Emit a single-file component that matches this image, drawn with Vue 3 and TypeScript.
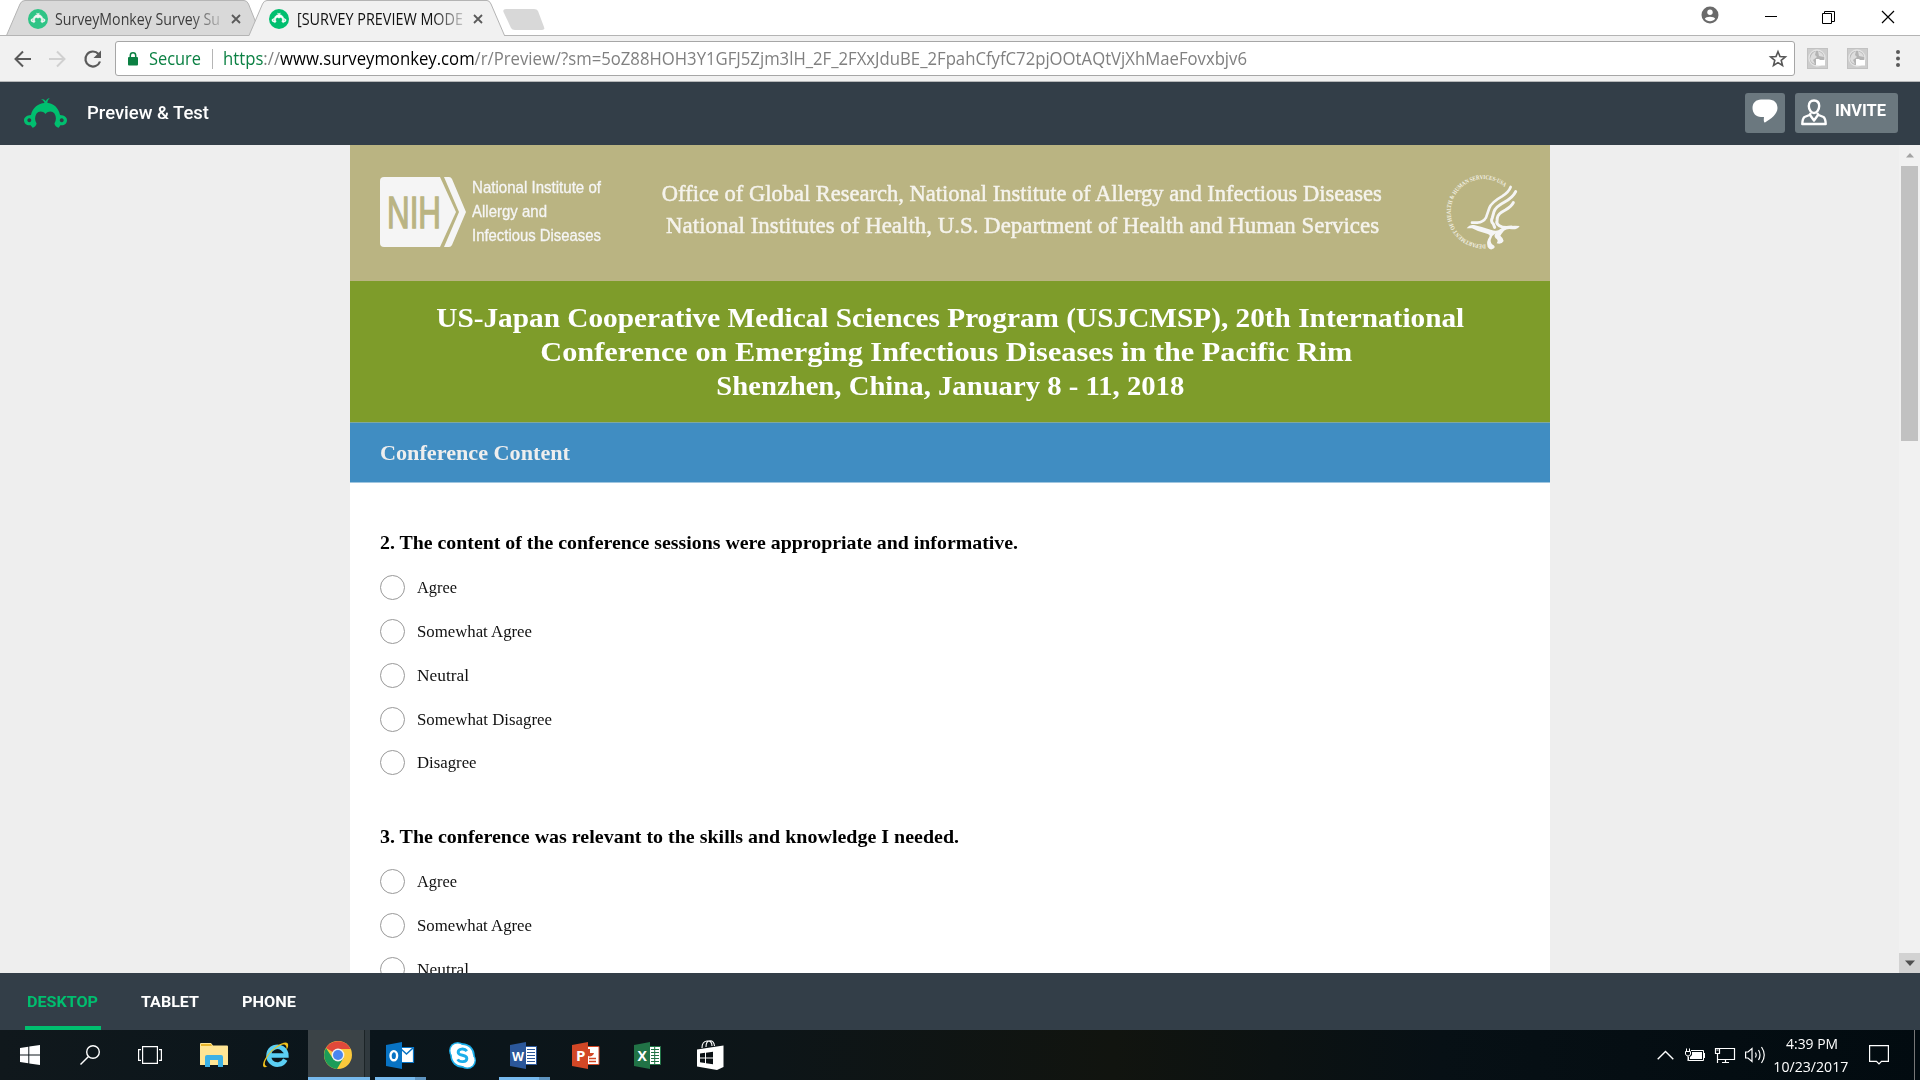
<script setup lang="ts">
import type { Directive } from 'vue'

// Condenses or widens a line of text so that it takes up the given width
const vFit: Directive<HTMLElement, number> = {
  mounted(el, { value }) {
    const natural = el.getBoundingClientRect().width
    if (natural > 0) el.style.transform = `scaleX(${value / natural})`
  },
}

interface Option { label: string; width: number }
interface Question { id: number; text: string; width: number; options: Option[] }

const options: Option[] = [
  { label: 'Agree', width: 40 },
  { label: 'Somewhat Agree', width: 115 },
  { label: 'Neutral', width: 52 },
  { label: 'Somewhat Disagree', width: 135 },
  { label: 'Disagree', width: 59.500 },
]

const questions: Question[] = [
  { id: 2, text: 'The content of the conference sessions were appropriate and informative.', width: 638, options },
  { id: 3, text: 'The conference was relevant to the skills and knowledge I needed.', width: 579, options: options.slice(0, 3) },
]

const title = [
  { text: 'US-Japan Cooperative Medical Sciences Program (USJCMSP), 20th International', width: 1028 },
  { text: 'Conference on Emerging Infectious Diseases in the Pacific Rim ', width: 812 },
  { text: 'Shenzhen, China, January 8 - 11, 2018', width: 468 },
]

const devices = [
  { name: 'DESKTOP', width: 71 },
  { name: 'TABLET', width: 58 },
  { name: 'PHONE', width: 54 },
]

const monkey =
  'M68 384C74 382 79 377 80 371C74 362 74 350 80 341C86 333 98 332 107 342C116 332 128 333 134 341C140 350 140 362 134 371C135 377 140 382 147 384L152 376C163 378 172 371 172 361C172 352 165 346 151 345C146 322 131 310 113 309C112 304 115 299 120 294C113 296 109 299 108 304C105 299 101 297 93 297C99 300 102 304 104 309C86 310 68 322 63 345C50 346 42 352 42 361C42 371 51 378 62 376ZM58 355a6 6 0 1 0 .1 0ZM156 355a6 6 0 1 0 .1 0Z'
</script>

<template>
  <div class="screen">
    <div class="tabstrip">
      <svg class="tab-shapes" width="560" height="36" viewBox="0 0 560 36">
        <path d="M6.500 35.500L20 4Q21.500.5 25 .5H244Q247 .5 248.500 4L261 35.500Z" fill="#d9d9d9" stroke="#b4b4b4" />
        <path d="M249 36L262.500 4Q264 .5 267 .5H487Q489.500 .5 491 4L504.500 36Z" fill="#f1f1f1" />
        <path d="M0 35.500H249L262.500 4Q264 .5 267 .5H487Q489.500 .5 491 4L504.500 35.500H560" fill="none" stroke="#b4b4b4" />
        <path d="M506 9H534Q537 9 538 11L544 27Q545 30 542 30H515Q512 30 511 28L503.500 12Q502.500 9 506 9Z" fill="#d8d8d8" />
      </svg>
      <div class="tab tab-first">
        <svg class="fav faded" width="20" height="20" viewBox="0 0 20 20"><circle cx="10" cy="10" r="10" fill="#00bf6f" /><svg x="3" y="3.500" width="14" height="11" viewBox="42 294 130 92"><path :d="monkey" fill="#fff" stroke="#fff" stroke-width="5" fill-rule="evenodd" /></svg></svg>
        <span class="tab-label"><span v-fit="165" class="fit">SurveyMonkey Survey Su</span></span>
        <svg class="x" width="10" height="10" viewBox="0 0 10 10"><path d="M1 1L9 9M9 1L1 9" /></svg>
      </div>
      <div class="tab tab-second">
        <svg class="fav" width="20" height="20" viewBox="0 0 20 20"><circle cx="10" cy="10" r="10" fill="#00bf6f" /><svg x="3" y="3.500" width="14" height="11" viewBox="42 294 130 92"><path :d="monkey" fill="#fff" stroke="#fff" stroke-width="5" fill-rule="evenodd" /></svg></svg>
        <span class="tab-label dark"><span v-fit="166" class="fit">[SURVEY PREVIEW MODE</span></span>
        <svg class="x" width="10" height="10" viewBox="0 0 10 10"><path d="M1 1L9 9M9 1L1 9" /></svg>
      </div>
      <div class="window-controls">
        <svg width="18" height="18" viewBox="0 0 18 18"><circle cx="9" cy="9" r="8.500" fill="#6a6a6a" /><circle cx="9" cy="6.300" r="2.700" fill="#fff" /><path d="M3.800 12.800C4.500 10 13.500 10 14.200 12.800C12 16 6 16 3.800 12.800Z" fill="#fff" /></svg>
        <svg width="12" height="14" viewBox="0 0 12 14"><path d="M0 6.500H12" stroke="#000" /></svg>
        <svg width="13" height="13" viewBox="0 0 13 13" fill="none" stroke="#000"><path d="M.5 2.500H9.500V12.500H.5ZM2.500 2.500V.5H12.500V10.500H9.500" /></svg>
        <svg width="12" height="12" viewBox="0 0 12 12"><path d="M0 0L12 12M12 0L0 12" stroke="#000" stroke-width="1.200" /></svg>
      </div>
    </div>

    <div class="toolbar">
      <svg class="nav-icons" width="90" height="24" viewBox="0 0 90 24" fill="none" stroke-width="2">
        <path d="M17 12H2M9 4.500L1.500 12L9 19.500" stroke="#5a5a5a" />
        <path d="M35 12H50M43 4.500L50.500 12L43 19.500" stroke="#d0d0d0" />
        <path d="M84.500 7A7.500 7.500 0 1 0 86 14.500" stroke="#5a5a5a" stroke-width="2.200" />
        <path d="M87 3.500V11H79.500Z" fill="#5a5a5a" />
      </svg>
      <div class="omnibox">
        <svg width="10" height="14" viewBox="0 0 10 14"><path d="M2.300 6V3.500a2.700 2.700 0 0 1 5.400 0V6" fill="none" stroke="#0b8043" stroke-width="1.500" /><rect y="5" width="10" height="8.500" rx="1" fill="#0b8043" /></svg>
        <span class="secure"><span v-fit="52" class="fit">Secure</span></span>
        <span class="divider"></span>
        <span class="url"><span v-fit="1024" class="fit"><span class="green">https</span>://<span class="host">www.surveymonkey.com</span>/r/Preview/?sm=5oZ88HOH3Y1GFJ5Zjm3lH_2F_2FXxJduBE_2FpahCfyfC72pjOOtAQtVjXhMaeFovxbjv6</span></span>
        <svg width="18" height="17" viewBox="0 0 18 17"><path d="M9 1.700L11 6.600L16.300 7L12.200 10.300L13.500 15.400L9 12.600L4.500 15.400L5.800 10.300L1.700 7L7 6.600Z" fill="none" stroke="#555" stroke-width="1.600" /></svg>
      </div>
      <svg v-for="n in 2" :key="n" class="ext" width="21" height="21" viewBox="0 0 21 21">
        <rect width="21" height="21" fill="#c2c2c2" /><rect x="1" y="1" width="19" height="19" fill="#cdcdcd" />
        <circle cx="10" cy="10" r="8" fill="#b4b4b4" stroke="#e4e4e4" stroke-width="1.300" />
        <path d="M3 11Q4 5 9 3L8 7L10 9L6 12L8 16Q4 15 3 11ZM11 3Q16 5 17 9L12 8Z" fill="#dedede" /><path d="M9 11H12L13 12H18V17.500H9Z" fill="#fff" />
      </svg>
      <svg class="dots" width="4" height="17" viewBox="0 0 4 17" fill="#5a5a5a"><circle cx="2" cy="2" r="2" /><circle cx="2" cy="8.500" r="2" /><circle cx="2" cy="15" r="2" /></svg>
    </div>

    <header class="header">
      <svg width="43" height="30.500" viewBox="42 294 130 92"><path :d="monkey" fill="#00bf6f" fill-rule="evenodd" /></svg>
      <span class="page-name"><span v-fit="122" class="fit">Preview &amp; Test</span></span>
      <button class="chat">
        <svg width="26" height="24" viewBox="0 0 26 24"><path d="M9 .5H17C22 .5 25.500 4 25.500 9C25.500 15 19 20 13 23.500C12 23.500 11.500 22 12 18H9C4 18 .5 14 .5 9C.5 4 4 .5 9 .5Z" fill="#fff" /></svg>
      </button>
      <button class="invite">
        <svg width="26" height="26" viewBox="0 0 26 26" fill="none" stroke="#fff" stroke-width="2.400" stroke-linejoin="round"><path d="M13 1.500C9.500 1.500 7.800 4 7.800 7C7.800 11 10.500 14 13 14S18.200 11 18.200 7C18.200 4 16.500 1.500 13 1.500Z" /><path d="M10 14L8.500 16L3.500 18Q1.500 19.500 1.300 25H24.700Q24.500 19.500 22.500 18L17.500 16L16 14M9 16L13 21.500L17 16" /></svg>
        <span v-fit="51" class="fit">INVITE</span>
      </button>
    </header>

    <main class="viewport">
      <div class="survey">
        <div class="banner">
          <svg width="84" height="70" viewBox="0 0 84 70">
            <path d="M4 0H60L76 35L60 70H4Q0 70 0 66V4Q0 0 4 0Z" fill="#f5f5f5" />
            <path d="M64 0H69Q71 0 72 2L86 35L72 68Q71 70 69 70H64L79 35Z" fill="#f5f5f5" />
            <text x="7" y="50.500" textLength="54" lengthAdjust="spacingAndGlyphs" font-family="Liberation Sans" font-size="44" stroke-width="1.400" stroke="#bab482" fill="#bab482">NIH</text>
          </svg>
          <div class="institute">
            <div><span v-fit="129" class="fit">National Institute of</span></div>
            <div><span v-fit="75" class="fit">Allergy and</span></div>
            <div><span v-fit="129" class="fit">Infectious Diseases</span></div>
          </div>
          <div class="office">
            <div><span v-fit="720" class="fit">Office of Global Research, National Institute of Allergy and Infectious Diseases</span></div>
            <div><span v-fit="713" class="fit">National Institutes of Health, U.S. Department of Health and Human Services</span></div>
          </div>
          <svg class="hhs" width="110" height="95" viewBox="0 0 330 285" fill="none" stroke="#f5f5f5">
            <path id="seal" d="M167 238A98 98 0 1 1 234 76" stroke="none" />
            <text font-family="Liberation Serif" font-weight="bold" font-size="18" fill="#f3f1e6" stroke="none"><textPath href="#seal" textLength="384" lengthAdjust="spacingAndGlyphs">DEPARTMENT OF HEALTH &amp; HUMAN SERVICES·USA</textPath></text>
            <g stroke-width="8" stroke-linecap="round" stroke-linejoin="round">
              <path d="M242 66Q236 82 216 94Q184 112 178 129L168 158Q160 172 142 173H126" />
              <path d="M257 80Q248 98 224 111Q197 125 192 140L187 158Q181 169 190 177L194 187" stroke-width="9" />
              <path d="M250 113Q244 125 226 135Q204 146 202 158L201 168Q198 176 208 182Q220 190 244 186" stroke-width="9" />
            </g>
            <path d="M110 190Q118 178 132 180Q158 186 182 194Q202 201 211 192Q219 185 232 186Q246 180 269 183Q263 194 246 193Q231 190 222 197Q214 207 211 212Q220 219 221 228Q214 240 200 235Q207 226 197 220Q190 213 197 205Q187 211 184 220Q179 228 186 238Q198 244 192 250Q180 258 173 246Q168 229 178 216Q183 209 166 205Q142 199 126 190Z" fill="#f5f5f5" stroke="none" />
          </svg>
        </div>

        <h1 class="title">
          <div v-for="line in title" :key="line.text"><span v-fit="line.width" class="fit">{{ line.text }}</span></div>
        </h1>
        <h2 class="section"><span v-fit="190" class="fit">Conference Content</span></h2>

        <section v-for="q in questions" :key="q.id" class="question">
          <h3><span v-fit="q.width" class="fit">{{ q.id }}. {{ q.text }}</span></h3>
          <label v-for="o in q.options" :key="o.label" class="option">
            <span class="radio"></span><span v-fit="o.width" class="fit">{{ o.label }}</span>
          </label>
        </section>
      </div>
      <div class="scrollbar">
        <span class="scroll-button"><svg width="8" height="5" viewBox="0 0 8 5"><path d="M4 0L8 4.500H0Z" fill="#a3a3a3" /></svg></span>
        <span class="thumb"></span>
        <span class="scroll-button down"><svg width="10" height="6" viewBox="0 0 10 6"><path d="M0 .5H10L5 6Z" fill="#505050" /></svg></span>
      </div>
    </main>

    <nav class="devices">
      <span v-for="(d, i) in devices" :key="d.name" class="device" :class="{ active: i === 0 }"><span v-fit="d.width" class="fit">{{ d.name }}</span></span>
    </nav>

    <footer class="taskbar">
      <div class="slot"><svg width="20" height="20" viewBox="0 0 20 20" fill="#fff"><path d="M0 3L8.300 1.800V9.500H0ZM9.300 1.600L20 0V9.500H9.300ZM0 10.500H8.300V18.200L0 17ZM9.300 10.500H20V20L9.300 18.400Z" /></svg></div>
      <div class="slot"><svg width="20" height="20" viewBox="0 0 20 20" fill="none" stroke="#fff" stroke-width="1.400"><circle cx="13" cy="7" r="6.300" /><path d="M8.500 11.500L.5 19.500" /></svg></div>
      <div class="slot task-view"><svg width="24" height="18" viewBox="0 0 24 18" fill="none" stroke="#fff" stroke-width="1.200"><path d="M4.600.6H19.400V17.400H4.600ZM3 3.600H.6V14.400H3M21 3.600H23.400V14.400H21" /></svg></div>
      <div class="slot wide"><svg width="28" height="24" viewBox="0 0 28 24"><path d="M0 1Q0 0 1 0H11L13 2.500H27Q28 2.500 28 3.500V22H0Z" fill="#ffe594" /><path d="M1 1H11L12 3H1Z" fill="#e8b62c" /><path d="M5 24V14Q5 12 7 12H21Q23 12 23 14V24H18V17H10V24Z" fill="#3cb1e6" /></svg></div>
      <div class="slot wide explorer"><svg width="28" height="28" viewBox="0 0 30 30"><path d="M25 20A9.500 9.500 0 1 1 26 15.500H9" fill="none" stroke="#5bcff4" stroke-width="5" /><path d="M6 27C0 31-1 24 6 15C14 4 29-3 28 5C28 7 27 8 26 10C27 5 25 2 19 5C10 9 3 20 3 24Q3 27 6 27Z" fill="#f2c21b" /></svg></div>
      <div class="slot wide chrome">
        <svg width="28" height="28" viewBox="0 0 28 28"><circle cx="14" cy="14" r="14" fill="#fbc93c" /><path d="M14 14L2 7A14 14 0 0 1 26.500 8H14Z" fill="#e0493b" /><path d="M2 7A14 14 0 0 0 13 28L19.500 17L14 14L8.500 17Z" fill="#1c9c58" /><circle cx="14" cy="14" r="6.400" fill="#f1f1f1" /><circle cx="14" cy="14" r="5" fill="#4a86ee" /></svg>
      </div>
      <div class="slot wide running"><svg width="28" height="27" viewBox="0 0 28 27"><path d="M15 5.500H27.500V20.500H15Z" fill="#fff" stroke="#0873c4" stroke-width="1.200" /><path d="M15 7L20.500 12L27 6" fill="none" stroke="#0873c4" stroke-width="1.500" /><path d="M0 3L16 0V27L0 24Z" fill="#0873c4" /><ellipse cx="7.800" cy="13.700" rx="3.300" ry="4.600" fill="none" stroke="#fff" stroke-width="2.400" /></svg></div>
      <div class="slot wide"><svg width="27" height="27" viewBox="0 0 28 28"><circle cx="9" cy="9" r="9" fill="#1baeea" /><circle cx="19" cy="19" r="9" fill="#1baeea" /><circle cx="14" cy="14" r="12.700" fill="#1baeea" /><circle cx="9" cy="9" r="7.500" fill="#fff" /><circle cx="19" cy="19" r="7.500" fill="#fff" /><circle cx="14" cy="14" r="11" fill="#fff" /><path d="M18.500 9.500C16 6 9.500 7 9.500 10.500C9.500 15 18.500 12.500 18.500 17C18.500 21 11 21.500 9 18" fill="none" stroke="#1baeea" stroke-width="3" /></svg></div>
      <div class="slot wide running"><svg width="28" height="27" viewBox="0 0 28 27"><path d="M15 4.500H26.500V22.500H15Z" fill="#fff" stroke="#2b579a" /><path d="M17 7.500H25M17 10.500H25M17 13.500H25M17 16.500H25M17 19.500H25" stroke="#2b579a" stroke-width="1.200" /><path d="M0 3L16 0V27L0 24Z" fill="#2b579a" /><text x="2" y="18.500" fill="#fff" font-family="Open Sans" font-weight="bold" font-size="13" textLength="12" lengthAdjust="spacingAndGlyphs">W</text></svg></div>
      <div class="slot wide"><svg width="28" height="27" viewBox="0 0 28 27"><path d="M15 4.500H27V22.500H15Z" fill="#fff" stroke="#d24726" /><path d="M17 16.500H24M17 19.500H24" stroke="#d24726" stroke-width="1.300" /><path d="M16 7A4 4 0 1 0 22 11H18V7Z" fill="#d24726" /><path d="M0 3L16 0V27L0 24Z" fill="#d24726" /><text x="4" y="19" fill="#fff" font-family="Open Sans" font-weight="bold" font-size="15">P</text></svg></div>
      <div class="slot wide"><svg width="28" height="27" viewBox="0 0 28 27"><path d="M15 4.500H26.500V22.500H15Z" fill="#fff" stroke="#217346" /><path d="M17 7.500H25M17 10.500H25M17 13.500H25M17 16.500H25M17 19.500H25M20.700 5V22" stroke="#217346" /><path d="M0 3L16 0V27L0 24Z" fill="#217346" /><text x="3.500" y="18.800" fill="#fff" font-family="Open Sans" font-weight="bold" font-size="14">X</text></svg></div>
      <div class="slot wide"><svg width="27" height="30" viewBox="0 0 27 30"><path d="M5 8Q5 1.500 10 1T15 6M9 7Q9 .8 13 .8Q17 .8 17.500 6" fill="none" stroke="#fff" stroke-width="1.100" /><path d="M0 9.500L26.500 5.500V27L20 30L0 26.500Z" fill="#fff" /><path d="M3 13.500L8 12.800V17.500H3ZM9 12.700L16 11.700V17.500H9ZM3 18.500H8V23L3 22.300ZM9 18.500H16V24.200L9 23.200Z" fill="#0b1115" /></svg></div>

      <div class="tray">
        <svg width="17" height="10" viewBox="0 0 17 10"><path d="M.7 9.300L8.500 1.500L16.300 9.300" fill="none" stroke="#fff" stroke-width="1.400" /></svg>
        <svg width="20" height="14" viewBox="0 0 20 14"><path d="M1.500.5V3M4.500.5V3M.5 3.500H5.500V6Q5 8 3 8T.5 6ZM3 8V13" fill="none" stroke="#fff" /><path d="M6 2.500H18.500V12.500H3.500V9" fill="none" stroke="#fff" /><path d="M7 4H17V11H5V9L7 7ZM19 5H20V10H19Z" fill="#fff" /></svg>
        <svg width="20" height="17" viewBox="0 0 20 17" fill="none" stroke="#fff"><path d="M5 1.500H19.500V12.500H3M10.500 13V16M7 15.500H14M.5 1.500H4.500V6.500H.5ZM2.500 7V16" stroke-width="1.200" /><path d="M1.500 3H3.500" /></svg>
        <svg width="21" height="18" viewBox="0 0 21 18" fill="none" stroke="#fff" stroke-width="1.200"><path d="M.6 6H3L7 2.500V15.500L3 12H.6ZM10.500 6.500Q12 9 10.500 11.500M13.500 4Q16.500 9 13.500 14M16.500 1Q22 9 16.500 17" /></svg>
        <div class="clock">
          <div><span v-fit="52" class="fit">4:39 PM</span></div>
          <div><span v-fit="75" class="fit date">10/23/2017</span></div>
        </div>
        <svg class="note" width="20" height="20" viewBox="0 0 20 20"><path d="M.6.6H19.400V16.400H12.500L10 19L7.500 16.400H.6Z" fill="none" stroke="#fff" stroke-width="1.200" /></svg>
        <span class="peek"></span>
      </div>
    </footer>
  </div>
</template>

<style>
body { margin: 0; overflow: hidden; }
</style>

<style scoped>
.screen { width: 1920px; height: 1080px; display: flex; flex-direction: column; overflow: hidden; background: #fff; font-family: "Open Sans", sans-serif; }
svg { display: block; flex: none; overflow: visible; }
.fit { display: inline-block; white-space: nowrap; transform-origin: left center; }

.tabstrip { position: relative; height: 35px; flex: none; display: flex; border-bottom: 1px solid #b4b4b4; }
.tab-shapes { position: absolute; left: 0; top: 0; }
.tab { position: relative; display: flex; align-items: center; height: 38px; }
.tab-first { margin-left: 28px; width: 241px; }
.tab-second { width: 260px; }
.fav { margin-right: 7px; }
.tab-second .fav { margin-right: 8px; }
.faded { opacity: .78; }
.tab-label { width: 166px; margin-top: -1px; overflow: hidden; font-size: 15.500px; line-height: 22px; color: #3c3c3c; mask-image: linear-gradient(to right, #000 82%, rgba(0, 0, 0, .2)); }
.tab-label.dark { color: #111; }
.x { margin-left: 10px; stroke: #5a5a5a; stroke-width: 1.800; }
.window-controls { margin-left: auto; margin-right: 26px; display: flex; align-items: center; gap: 46px; height: 34px; }
.window-controls svg:first-child { position: relative; top: -2px; left: 1px; }
.window-controls svg:nth-child(2) { position: relative; left: 1px; }
.window-controls svg:last-child { margin-left: 1px; }

.toolbar { height: 45px; flex: none; display: flex; align-items: center; background: #f1f1f1; border-bottom: 1px solid #b6b7b9; }
.nav-icons { margin: 0 11px 0 14px; }
.omnibox { box-sizing: border-box; width: 1680px; height: 35px; display: flex; align-items: center; border: 1px solid #a6a6a6; border-radius: 3px; background: #fff; padding: 0 7px 0 12px; font-size: 17.500px; line-height: 24px; }
.secure { margin: -1px 0 0 11px; width: 63px; color: #0b8043; }
.divider { width: 1px; height: 20px; background: #b5b5b5; margin-right: 10px; }
.url { width: 1030px; margin: -1px auto 0 0; color: #808080; }
.green { color: #0b8043; }
.host { color: #000; }
.ext { margin-left: 12px; }
.ext + .ext { margin-left: 19px; }
.dots { margin-left: 28px; }

.header { height: 63px; flex: none; box-sizing: border-box; display: flex; align-items: center; background: #333e48; padding: 0 22px 1px 24px; color: #fff; }
.page-name { margin-left: 20px; font: 500 18px/24px Roboto, sans-serif; }
button { border: 0; border-radius: 3px; background: #6b787f; height: 40px; padding: 0; display: flex; align-items: center; margin-top: -1px; }
.chat { margin-left: auto; width: 40px; justify-content: center; padding-bottom: 3px; }
.invite { margin-left: 10px; width: 103px; padding-left: 6px; gap: 8px; color: #fff; font: 700 16px/20px Roboto, sans-serif; }
.invite svg { margin-top: -2px; }
.invite .fit { margin-top: -3px; }

.viewport { position: relative; height: 828px; flex: none; overflow: hidden; display: flex; background: #eee; }
.survey { width: 1200px; height: 828px; margin-left: 350px; background: #fff; font-family: "Liberation Serif", serif; flex: none; }
.banner { height: 136px; box-sizing: border-box; background: #bab482; display: flex; align-items: flex-start; padding: 32px 10px 0 30px; }
.institute { width: 150px; margin-left: 8px; font: 17px/24px "Liberation Sans", sans-serif; color: #f5f5f5; margin-top: -1px; -webkit-text-stroke: .3px #f5f5f5; }
.office { width: 780px; text-align: center; font-size: 24px; line-height: 32px; color: #f5f3ec; -webkit-text-stroke: .5px #f5f3ec; margin-left: 16px; }
.office .fit, .title .fit { transform-origin: center; }
.hhs { margin: -12px 0 0 22px; }
.title { margin: 0; box-sizing: border-box; height: 142px; padding-top: 20px; border-bottom: 1px solid #7fa7a0; background: #7e9c2a; color: #fff; text-align: center; font-size: 28px; line-height: 34px; font-weight: 700; }
.title div:nth-child(2) { padding-right: 8px; }
.section { margin: 0; box-sizing: border-box; height: 60px; padding: 0 30px; background: #408dc2; border-bottom: 1px solid #a0c6e0; color: #eee; font-size: 22px; line-height: 60px; font-weight: 700; }
.question { padding: 46px 30px 0; height: 248px; }
.question + .question { height: auto; }
h3 { margin: 0 0 9px; height: 28px; font-size: 19px; line-height: 28px; color: #000; }
.option { display: flex; align-items: center; height: 43.750px; font-size: 17.500px; line-height: 24px; color: #111; }
.option .fit { margin-top: -1px; }
.radio { box-sizing: border-box; width: 25px; height: 25px; border: 1px solid #999; border-radius: 50%; margin-right: 12px; }

.scrollbar { width: 21px; height: 828px; margin-left: auto; display: flex; flex-direction: column; align-items: center; background: #f1f1f1; }
.scroll-button { width: 21px; height: 21px; display: flex; align-items: center; justify-content: center; }
.thumb { width: 17px; height: 275px; background: #c1c1c1; }
.down { margin-top: auto; height: 20px; background: #d2d2d2; }

.devices { height: 57px; flex: none; display: flex; background: #333e48; color: #fff; font: 700 15.500px/24px Roboto, sans-serif; padding-left: 25px; }
.device { box-sizing: border-box; height: 57px; padding-top: 17px; width: 76px; margin-right: 38px; padding-left: 2px; }
.device + .device { width: 64px; margin-right: 37px; }
.active { color: #00bf6f; border-bottom: 4px solid #00bf6f; }

.taskbar { height: 50px; flex: none; display: flex; background: linear-gradient(to right, #10181c, #0a151b 20%, #0d1518 40%, #11140f 58%, #071015 75%, #020b10); }
.slot { width: 60px; height: 50px; display: flex; align-items: center; justify-content: center; }
.task-view { margin-right: 3px; }
.wide { width: 62px; box-sizing: border-box; }
.explorer { padding-right: 1px; margin-right: 1px; }
.chrome { background: linear-gradient(to right, #3b4347 56px, #1c2427 56px, #1c2427 57px, #30393e 57px); border-bottom: 3px solid #76b9ed; padding: 3px 2px 0 0; }
.chrome + .running { margin-left: -1px; }
.running { background: linear-gradient(to right, transparent 6px, #76b9ed 6px, #76b9ed 46px, #5e94c0 46px, #5e94c0 57px, transparent 57px) bottom / 100% 3px no-repeat; }
.tray { margin-left: auto; display: flex; align-items: center; color: #fff; }
.tray > svg { margin-right: 10px; }
.tray > svg:first-child { margin-right: 11px; }
.clock { width: 75px; margin-left: -1px; text-align: center; font-size: 15px; line-height: 23px; height: 47px; }
.clock .fit { transform-origin: center; }
.clock .date { margin-left: -4px; }
.tray .note { margin: 0 25px 0 19px; }
.peek { width: 1px; height: 50px; background: #777; margin-right: 5px; }
</style>
